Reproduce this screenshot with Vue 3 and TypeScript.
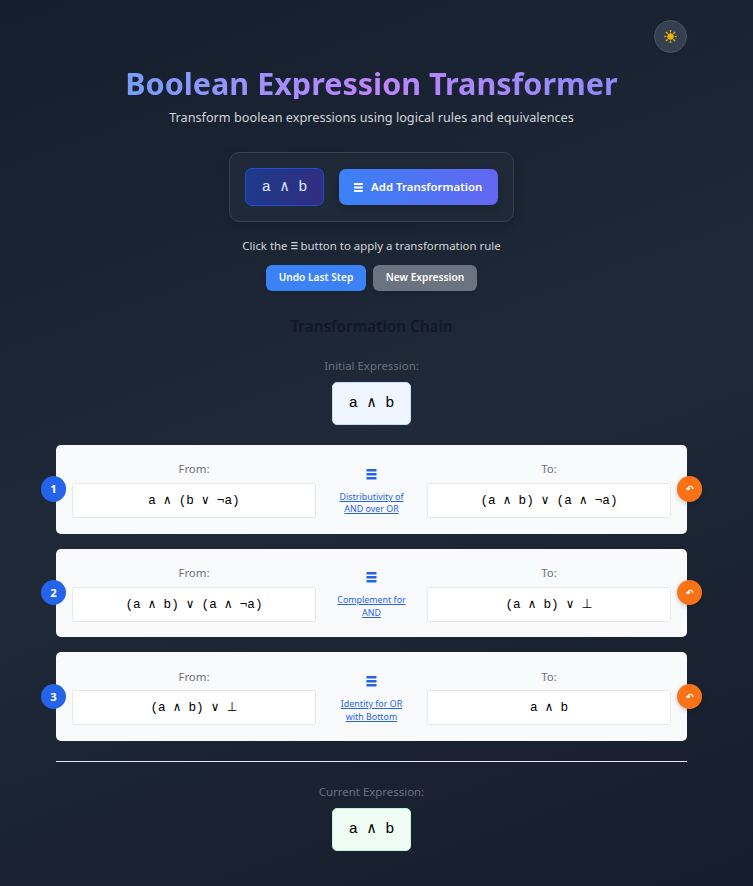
<script setup lang="ts">
import { ref } from 'vue'

interface Step {
  from: string
  to: string
  rule: string
}

const current = ref('a ∧ b')
const initial = ref('a ∧ b')
const steps = ref<Step[]>([
  { from: 'a ∧ (b ∨ ¬a)', to: '(a ∧ b) ∨ (a ∧ ¬a)', rule: 'Distributivity of AND over OR' },
  { from: '(a ∧ b) ∨ (a ∧ ¬a)', to: '(a ∧ b) ∨ ⊥', rule: 'Complement for AND' },
  { from: '(a ∧ b) ∨ ⊥', to: 'a ∧ b', rule: 'Identity for OR with Bottom' },
])
const rays = [0, 45, 90, 135, 180, 225, 270, 315]

// Splits an expression so the bottom symbol can use its own font.
const parts = (text: string): string[] => text.split(/(⊥)/).filter(Boolean)
</script>

<template>
  <div class="page">
    <div class="toolbar">
      <button class="theme" aria-label="Toggle theme">
        <svg width="13" height="13" viewBox="-6.5 -6.5 13 13" fill="currentColor">
          <circle r="3.2" />
          <path v-for="a in rays" :key="a" d="M-1.1 -6.2H1.1L0.3 -3.9H-0.3Z" :transform="`rotate(${a})`" />
        </svg>
      </button>
    </div>
    <header class="header">
      <h1>Boolean Expression Transformer</h1>
      <p>Transform boolean expressions using logical rules and equivalences</p>
    </header>

    <section class="panel">
      <div class="expr">{{ current }}</div>
      <button class="add">
        <svg class="add-icon" width="9" height="9" viewBox="0 0 9 9" fill="currentColor">
          <path d="M0 0H8.7V2H0ZM0 3.5H8.7V5.5H0ZM0 7H8.7V9H0Z" />
        </svg>
        <span>Add Transformation</span>
      </button>
    </section>

    <p class="hint">
      Click the
      <svg class="hint-icon" width="7" height="8" viewBox="0 0 7 8" fill="currentColor">
        <path d="M0.2 0H6.6V1.2H0.2ZM0.2 3H6.6V4.2H0.2ZM0.2 6H6.6V7.2H0.2Z" />
      </svg>
      button to apply a transformation rule
    </p>
    <div class="actions">
      <button class="action undo">Undo Last Step</button>
      <button class="action fresh">New Expression</button>
    </div>

    <h2>Transformation Chain</h2>
    <div class="label initial-label">Initial Expression:</div>
    <div class="state initial">{{ initial }}</div>

    <div class="steps">
      <article v-for="(step, i) in steps" :key="i" class="step">
        <span class="badge number">{{ i + 1 }}</span>
        <div class="side">
          <div class="label">From:</div>
          <div class="box"><span v-for="(part, k) in parts(step.from)" :key="k" :class="{ bottom: part === '⊥' }">{{ part }}</span></div>
        </div>
        <div class="rule">
          <svg width="11" height="11" viewBox="0 0 11 11" fill="currentColor">
            <path d="M0.5 0H10.5V2.4H0.5ZM0.5 4H10.5V6.4H0.5ZM0.5 8.1H10.5V10.6H0.5Z" />
          </svg>
          <a>{{ step.rule }}</a>
        </div>
        <div class="side">
          <div class="label">To:</div>
          <div class="box"><span v-for="(part, k) in parts(step.to)" :key="k" :class="{ bottom: part === '⊥' }">{{ part }}</span></div>
        </div>
        <button class="badge revert" aria-label="Revert">↶</button>
      </article>
    </div>

    <footer class="final">
      <div class="label">Current Expression:</div>
      <div class="state result">{{ current }}</div>
    </footer>
  </div>
</template>

<style>
html {
  font-size: 12.7px;
}
body {
  margin: 0;
}
</style>

<style scoped>
.page {
  box-sizing: border-box;
  height: 886px;
  overflow: hidden;
  padding: 20px 66px 0 56px;
  display: flex;
  flex-direction: column;
  align-items: center;
  font-family: 'Noto Sans', sans-serif;
  font-size: 1rem;
  line-height: 1.5;
  background: linear-gradient(160deg, #151e2d 0%, #1f2937 50%, #161d2d 100%);
}
h1, h2, p {
  margin: 0;
}
button {
  font-family: inherit;
  padding: 0;
  border: 0;
  cursor: pointer;
}
.toolbar {
  width: 100%;
  display: flex;
  justify-content: flex-end;
}
.theme {
  box-sizing: border-box;
  width: 33px;
  height: 33px;
  display: flex;
  align-items: center;
  justify-content: center;
  border: 1px solid #4b5563;
  border-radius: 50%;
  background: #353f4f;
  color: #eab308;
  box-shadow: 0 2px 4px rgba(0, 0, 0, 0.1);
}
.header {
  width: 100%;
  margin-top: 15px;
  text-align: center;
}
h1 {
  font-size: 30.53px;
  line-height: 31px;
  font-weight: 700;
  color: transparent;
  background: linear-gradient(90deg, #60a5fa, #c084fc, #818cf8);
  -webkit-background-clip: text;
  background-clip: text;
}
.header p {
  margin-top: 9px;
  line-height: 19px;
  color: #d1d5db;
}
.panel {
  box-sizing: border-box;
  height: 70px;
  margin-top: 25px;
  padding: 0 15px;
  display: flex;
  align-items: center;
  gap: 15px;
  border: 1px solid #374151;
  border-radius: 10px;
  background: #1f2937;
  box-shadow: 0 4px 12px rgba(0, 0, 0, 0.18);
}
.expr {
  box-sizing: border-box;
  width: 79px;
  height: 38px;
  line-height: 36px;
  text-align: center;
  border: 1px solid #1d4ed8;
  border-radius: 7px;
  background: linear-gradient(90deg, #1e3a8a, #312e81);
  color: #dbeafe;
  font-family: 'Liberation Mono', monospace;
  font-size: 1.2rem;
}
.add {
  box-sizing: border-box;
  width: 159px;
  height: 36px;
  padding: 0 15.6px 1px 15.3px;
  display: flex;
  align-items: center;
  justify-content: space-between;
  border-radius: 7px;
  background: linear-gradient(90deg, #3b82f6, #6366f1);
  color: #fff;
  font-size: 0.9rem;
  font-weight: 600;
  box-shadow: 0 4px 8px rgba(0, 0, 0, 0.15);
}
.add-icon {
  margin-top: 2px;
}
.hint {
  margin-top: 15px;
  line-height: 18px;
  font-size: 0.9rem;
  color: #d1d5db;
}
.hint-icon {
  vertical-align: 0;
}
.actions {
  margin-top: 10px;
  display: flex;
  gap: 7px;
}
.action {
  box-sizing: border-box;
  height: 26px;
  padding-bottom: 2px;
  border-radius: 6px;
  color: #fff;
  font-size: 0.8rem;
  font-weight: 600;
  box-shadow: 0 2px 4px rgba(0, 0, 0, 0.12);
}
.undo {
  width: 100px;
  background: #3b82f6;
}
.fresh {
  width: 104px;
  background: #6b7280;
}
h2 {
  margin-top: 23px;
  line-height: 24px;
  font-size: 1.205rem;
  font-weight: 600;
  color: #111827;
}
.label {
  line-height: 18px;
  font-size: 0.9rem;
  color: #6b7280;
  text-align: center;
}
.initial-label {
  margin-top: 19px;
}
.state {
  box-sizing: border-box;
  width: 79px;
  height: 43px;
  margin: 7px auto 0;
  line-height: 41px;
  text-align: center;
  border: 1px solid #bfdbfe;
  border-radius: 5px;
  background: #eff6ff;
  color: #000;
  font-family: 'Liberation Mono', monospace;
  font-size: 1.2rem;
}
.result {
  border-color: #bbf7d0;
  background: #f0fdf4;
}
.steps {
  width: 100%;
  margin-top: 20px;
  display: flex;
  flex-direction: column;
  gap: 15px;
}
.step {
  box-sizing: border-box;
  position: relative;
  height: 88.6px;
  padding: 15.4px 16px 0;
  display: grid;
  grid-template-columns: 1fr 81px 1fr;
  column-gap: 15px;
  border-radius: 5px;
  background: #f9fafb;
}
.box {
  box-sizing: border-box;
  height: 35px;
  margin-top: 4.8px;
  line-height: 33px;
  text-align: center;
  white-space: pre;
  border: 1px solid #e5e7eb;
  border-radius: 2.5px;
  background: #fff;
  color: #000;
  font-family: 'Liberation Mono', monospace;
  font-size: 1rem;
}
.bottom {
  font-family: 'DejaVu Sans', sans-serif;
  line-height: 1;
}
.rule {
  padding-top: 8.3px;
  display: flex;
  flex-direction: column;
  align-items: center;
  color: #2563eb;
  text-align: center;
}
.rule a {
  margin-top: 11.1px;
  font-size: 0.7rem;
  line-height: 12.6px;
  text-decoration: underline;
}
.badge {
  position: absolute;
  top: 31.4px;
  width: 25.4px;
  height: 25.4px;
  line-height: 25.4px;
  text-align: center;
  border-radius: 50%;
  color: #fff;
  font-weight: 700;
}
.number {
  left: -15.3px;
  background: #2563eb;
  font-size: 0.9rem;
}
.revert {
  right: -15.3px;
  background: #f97316;
  font-size: 9px;
  box-shadow: 0 2px 5px rgba(0, 0, 0, 0.2);
}
.final {
  width: 100%;
  margin-top: 20px;
  padding-top: 21px;
  border-top: 1px solid #e5e7eb;
}
</style>
